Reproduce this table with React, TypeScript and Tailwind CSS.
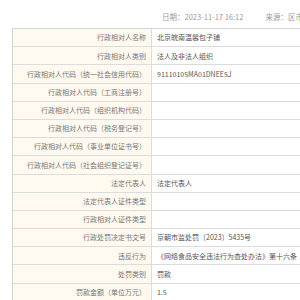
import React from "react";

const rows: [string, string][] = [
  ["行政相对人名称", "北京皖南温馨包子铺"],
  ["行政相对人类别", "法人及非法人组织"],
  ["行政相对人代码（统一社会信用代码）", "91110105MA01DNEE5J"],
  ["行政相对人代码（工商注册号）", ""],
  ["行政相对人代码（组织机构代码）", ""],
  ["行政相对人代码（税务登记号）", ""],
  ["行政相对人代码（事业单位证书号）", ""],
  ["行政相对人代码（社会组织登记证号）", ""],
  ["法定代表人", "法定代表人"],
  ["法定代表人证件类型", ""],
  ["行政相对人证件类型", ""],
  ["行政处罚决定书文号", "京朝市监处罚〔2023〕5435号"],
  ["违反行为", "《网络食品安全违法行为查处办法》第十六条"],
  ["处罚类别", "罚款"],
  ["罚款金额（单位万元）", "1.5"],
];

export default function App() {
  return (
    <div
      className="w-[300px] h-[300px] overflow-hidden bg-white"
      style={{ fontFamily: '"Noto Sans CJK SC", "Noto Sans", sans-serif' }}
    >
      <div className="h-[28px] flex items-end pb-[6px] pl-[162px] text-[7.5px] text-[#999] whitespace-nowrap">
        <span>日期：2023-11-17 16:12</span>
        <span className="ml-[22px]">来源：区市场监管局</span>
      </div>
      <div className="ml-[12px] w-[400px] border-l border-t border-[#d4d4d4]">
        {rows.map(([k, v], i) => (
          <div key={i} className="flex h-[18.2px] border-b border-[#dcdcdc]">
            <div className="w-[139px] shrink-0 bg-[#fff9ef] border-r border-[#dcdcdc] flex items-center justify-end pr-[5px] text-[7px] text-[#777] whitespace-nowrap">
              {k}
            </div>
            <div className="flex-1 flex items-center pl-[5px] text-[7px] text-[#555] whitespace-nowrap">
              {v}
            </div>
          </div>
        ))}
      </div>
    </div>
  );
}
